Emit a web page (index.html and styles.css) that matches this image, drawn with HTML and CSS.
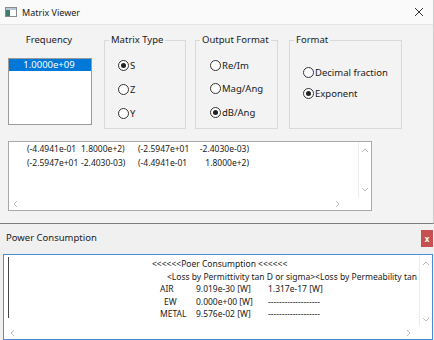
FILE: index.html
```html
<!DOCTYPE html>
<html lang="en">
<head>
    <meta charset="UTF-8">
    <title>Matrix Viewer</title>
    <link rel="stylesheet" href="styles.css">
</head>
<body>

    <!-- Matrix Viewer dialog -->
    <div class="dialog">
        <div class="titlebar">
            <svg class="app-icon" width="12" height="10" viewBox="0 0 12 10">
                <rect x="0.5" y="0.5" width="11" height="9" fill="#ffffff" stroke="#8a8a8a"/>
                <rect x="1" y="1" width="10" height="2" fill="#b9c9d9"/>
                <rect x="1" y="3" width="4" height="6" fill="#3f7c6b"/>
            </svg>
            <span class="title">Matrix Viewer</span>
            <svg class="title-close" width="10" height="10" viewBox="0 0 10 10">
                <path d="M1 1 L9 9 M9 1 L1 9" stroke="#333" stroke-width="1"/>
            </svg>
        </div>

        <div class="dialog-body">
            <div class="options">
                <div class="freq">
                    <div class="freq-label">Frequency</div>
                    <div class="listbox">
                        <div class="list-item selected">1.0000e+09</div>
                    </div>
                </div>

                <fieldset class="group group-matrix">
                    <legend>Matrix Type</legend>
                    <label class="radio checked"><span class="dot"></span>S</label>
                    <label class="radio"><span class="dot"></span>Z</label>
                    <label class="radio"><span class="dot"></span>Y</label>
                </fieldset>

                <fieldset class="group group-output">
                    <legend>Output Format</legend>
                    <label class="radio"><span class="dot"></span>Re/Im</label>
                    <label class="radio"><span class="dot"></span>Mag/Ang</label>
                    <label class="radio checked"><span class="dot"></span>dB/Ang</label>
                </fieldset>

                <fieldset class="group group-format">
                    <legend>Format</legend>
                    <label class="radio"><span class="dot"></span>Decimal fraction</label>
                    <label class="radio checked"><span class="dot"></span>Exponent</label>
                </fieldset>
            </div>

            <!-- matrix values -->
            <div class="matrix-box">
                <div class="matrix-text">
                    <div class="mrow">
                        <span>(-4.4941e-01</span><span>1.8000e+2)</span><span>(-2.5947e+01</span><span class="last">-2.4030e-03)</span>
                    </div>
                    <div class="mrow">
                        <span>(-2.5947e+01</span><span>-2.4030-03)</span><span>(-4.4941e-01</span><span class="last">1.8000e+2)</span>
                    </div>
                </div>
                <div class="vscroll">
                    <svg width="8" height="5" viewBox="0 0 8 5"><path d="M1 4 L4 1 L7 4" fill="none" stroke="#bdbdbd"/></svg>
                    <svg width="8" height="5" viewBox="0 0 8 5"><path d="M1 1 L4 4 L7 1" fill="none" stroke="#bdbdbd"/></svg>
                </div>
                <div class="hscroll">
                    <svg width="5" height="8" viewBox="0 0 5 8"><path d="M4 1 L1 4 L4 7" fill="none" stroke="#bdbdbd"/></svg>
                    <svg width="5" height="8" viewBox="0 0 5 8"><path d="M1 1 L4 4 L1 7" fill="none" stroke="#bdbdbd"/></svg>
                </div>
                <div class="corner"></div>
            </div>
        </div>
    </div>

    <!-- Power Consumption panel -->
    <div class="panel">
        <div class="panel-head">
            <span class="panel-title">Power Consumption</span>
            <span class="panel-close">x</span>
        </div>
        <div class="log-box">
            <div class="log-text">
                <div class="caret"></div>
                <div class="log-line heading">&lt;&lt;&lt;&lt;&lt;&lt;Poer Consumption &lt;&lt;&lt;&lt;&lt;&lt;</div>
                <div class="log-line sub">&lt;Loss by Permittivity tan D or sigma&gt;&lt;Loss by Permeability tan</div>
                <div class="log-line row"><span class="name">AIR</span><span>9.019e-30 [W]</span><span>1.317e-17 [W]</span></div>
                <div class="log-line row"><span class="name ew">EW</span><span>0.000e+00 [W]</span><span>-------------------</span></div>
                <div class="log-line row"><span class="name">METAL</span><span>9.576e-02 [W]</span><span>-------------------</span></div>
            </div>
            <div class="vscroll log-v">
                <svg width="8" height="5" viewBox="0 0 8 5"><path d="M1 4 L4 1 L7 4" fill="none" stroke="#bdbdbd"/></svg>
                <svg width="8" height="5" viewBox="0 0 8 5"><path d="M1 1 L4 4 L7 1" fill="none" stroke="#bdbdbd"/></svg>
            </div>
            <div class="hscroll log-h">
                <svg width="5" height="8" viewBox="0 0 5 8"><path d="M4 1 L1 4 L4 7" fill="none" stroke="#bdbdbd"/></svg>
                <svg width="5" height="8" viewBox="0 0 5 8"><path d="M1 1 L4 4 L1 7" fill="none" stroke="#bdbdbd"/></svg>
            </div>
            <div class="corner"></div>
        </div>
    </div>

</body>
</html>
```

FILE: styles.css
```css
body {
    margin: 0;
    width: 434px;
    height: 340px;
    overflow: hidden;
    background-color: #f0f0f0;
    font-family: "Noto Sans", sans-serif;
    color: #1a1a1a;
}

/* Dialog window */
.dialog {
    height: 223px;
    background-color: #f3f3f3;
    border-bottom: 1px solid #7c7c7c;
    border-right: 1px solid #cfcfcf;
    width: 433px;
}

.titlebar {
    display: flex;
    align-items: center;
    height: 24px;
    background-color: #fafafa;
    border-bottom: 1px solid #e4e4e4;
    padding-left: 5px;
}

.app-icon {
    margin-right: 5px;
}

.title {
    font-size: 9px;
    color: #222;
}

.title-close {
    margin-left: auto;
    margin-right: 9px;
}

.dialog-body {
    padding: 9px 0 0 8px;
}

.options {
    display: flex;
    height: 95px;
    align-items: flex-start;
}

.freq {
    width: 84px;
}

.freq-label {
    font-size: 9.5px;
    line-height: 12px;
    text-align: center;
    margin-left: -2px;
}

.listbox {
    margin-top: 12px;
    height: 65px;
    background-color: #fff;
    border: 1px solid #9a9a9a;
}

.list-item {
    font-size: 9.5px;
    line-height: 12px;
    text-align: center;
    padding-right: 2px;
}

.list-item.selected {
    background-color: #0078d7;
    color: #fff;
}

/* Group boxes */
.group {
    box-sizing: border-box;
    height: 95px;
    margin: 0;
    padding: 12px 4px 0 4px;
    border: 1px solid #d9d9d9;
    display: flex;
    flex-direction: column;
    gap: 10px;
    min-width: 0;
}

.group legend {
    font-size: 9.5px;
    line-height: 12px;
    padding: 0 2px;
}

.group-matrix {
    width: 82px;
    margin-left: 12px;
}

.group-output {
    width: 83px;
    margin-left: 9px;
    gap: 9.5px;
}

.group-format {
    width: 113px;
    margin-left: 11px;
    padding-top: 19px;
    gap: 7px;
}

.radio {
    display: flex;
    align-items: center;
    height: 14px;
    font-size: 9.5px;
    margin-left: 9px;
}

.group-output .radio {
    margin-left: 10px;
}

.radio .dot {
    box-sizing: border-box;
    width: 11px;
    height: 11px;
    border: 1px solid #333;
    border-radius: 50%;
    background-color: #fff;
    margin-right: 1px;
    display: flex;
    align-items: center;
    justify-content: center;
}

.radio.checked .dot::after {
    content: "";
    width: 5px;
    height: 5px;
    border-radius: 50%;
    background-color: #222;
}

/* Matrix output box */
.matrix-box {
    margin-top: 12px;
    width: 362px;
    height: 68px;
    border: 1px solid #a9a9a9;
    background-color: #fff;
    display: grid;
    grid-template-columns: 1fr 13px;
    grid-template-rows: 1fr 13px;
}

.matrix-text {
    padding-left: 18px;
    font-size: 8.5px;
    line-height: 14px;
    overflow: hidden;
}

.mrow {
    display: grid;
    grid-template-columns: 54px 57px 60px 51px;
    white-space: nowrap;
}

.mrow .last {
    text-align: right;
}

.vscroll {
    display: flex;
    flex-direction: column;
    justify-content: space-between;
    align-items: center;
    padding: 6px 0 5px;
    border-left: 1px solid #ececec;
}

.hscroll {
    display: flex;
    justify-content: space-between;
    align-items: center;
    padding: 0 18px 0 4px;
}

/* Power Consumption panel */
.panel-head {
    display: flex;
    align-items: center;
    justify-content: space-between;
    height: 30px;
    padding-left: 6px;
}

.panel-title {
    font-size: 9.5px;
    color: #222;
    margin-top: -3px;
}

.panel-close {
    width: 12px;
    height: 17px;
    margin-right: 1px;
    margin-top: -1px;
    background-color: #c75050;
    color: #fff;
    font-size: 8px;
    font-weight: bold;
    line-height: 17px;
    text-align: center;
}

.log-box {
    margin-left: 3px;
    width: 428px;
    border: 1px solid #4a8fd6;
    background-color: #fff;
    display: grid;
    grid-template-columns: 1fr 13px;
    grid-template-rows: 71px 13px;
}

.log-text {
    position: relative;
    padding-top: 3px;
    font-size: 8.5px;
    line-height: 12.6px;
    overflow: hidden;
    white-space: nowrap;
}

.caret {
    position: absolute;
    left: 4px;
    top: 2px;
    width: 1px;
    height: 61px;
    background-color: #444;
}

.log-line.heading {
    padding-left: 148px;
}

.log-line.sub {
    padding-left: 163px;
}

.log-line.row {
    display: grid;
    grid-template-columns: 36px 72px auto;
    padding-left: 156px;
}

.log-line .ew {
    padding-left: 4px;
}

.log-v {
    padding: 6px 0 4px;
}

.log-h {
    padding: 0 8px 0 6px;
}
```
